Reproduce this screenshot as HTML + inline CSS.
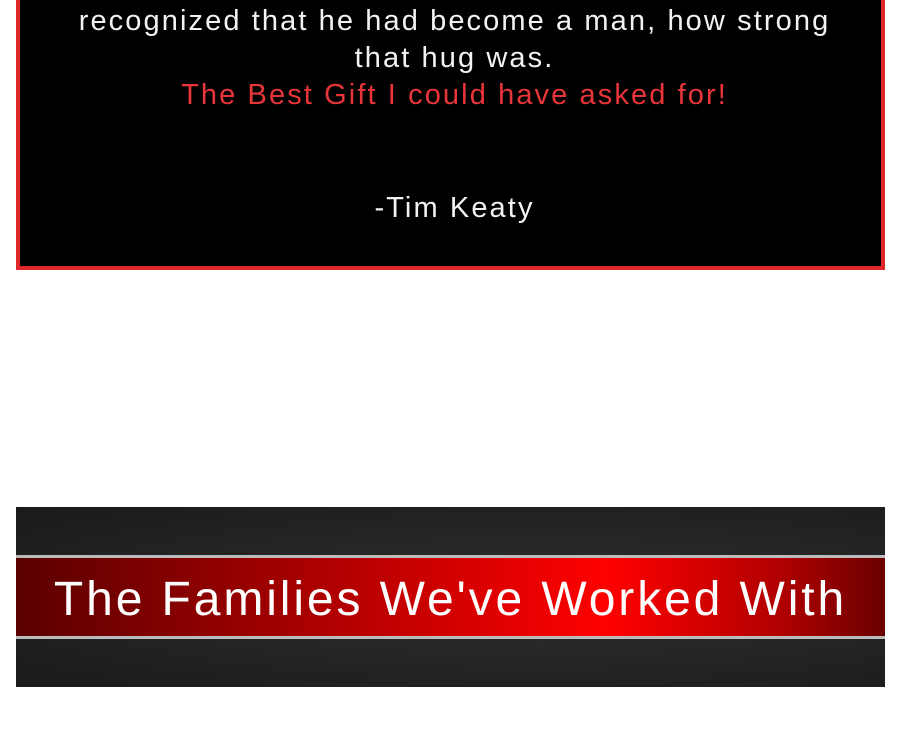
<!DOCTYPE html>
<html><head><style>
html,body{margin:0;padding:0;background:#fff;width:903px;height:734px;overflow:hidden;font-family:"Liberation Sans",sans-serif;}
.box{position:absolute;left:16px;top:-60px;width:861px;height:326px;background:#000;border:4px solid #e0282a;border-top:none;}
.t{position:absolute;left:0;width:869px;text-align:center;font-size:29px;color:#f2f2f2;white-space:nowrap;letter-spacing:2.1px}
.red{color:#e8353a}
.ban{position:absolute;left:16px;top:507px;width:869px;height:180px;background:radial-gradient(ellipse at 60% 50%,#303030 0%,#1a1a1a 100%);}
.band{position:absolute;left:0;top:48px;width:869px;height:84px;border-top:3px solid #bbb;border-bottom:3px solid #bbb;background:linear-gradient(90deg,#5a0000 0%,#a00000 30%,#ff0000 68%,#b00000 88%,#6a0000 100%);box-sizing:border-box}
.bt{position:absolute;left:0;width:869px;top:14px;text-align:center;color:#fff;font-size:48px;letter-spacing:2.9px;white-space:nowrap}
</style></head><body>
<div class="box">
<div class="t" style="top:22px">he hugged my son for the first time and</div>
<div class="t" style="top:65px">recognized that he had become a man, how strong</div>
<div class="t" style="top:102px">that hug was.</div>
<div class="t red" style="top:139px">The Best Gift I could have asked for!</div>
<div class="t" style="top:252px">-Tim Keaty</div>
</div>
<div class="ban"><div class="band"><div class="bt">The Families We've Worked With</div></div></div>
</body></html>
